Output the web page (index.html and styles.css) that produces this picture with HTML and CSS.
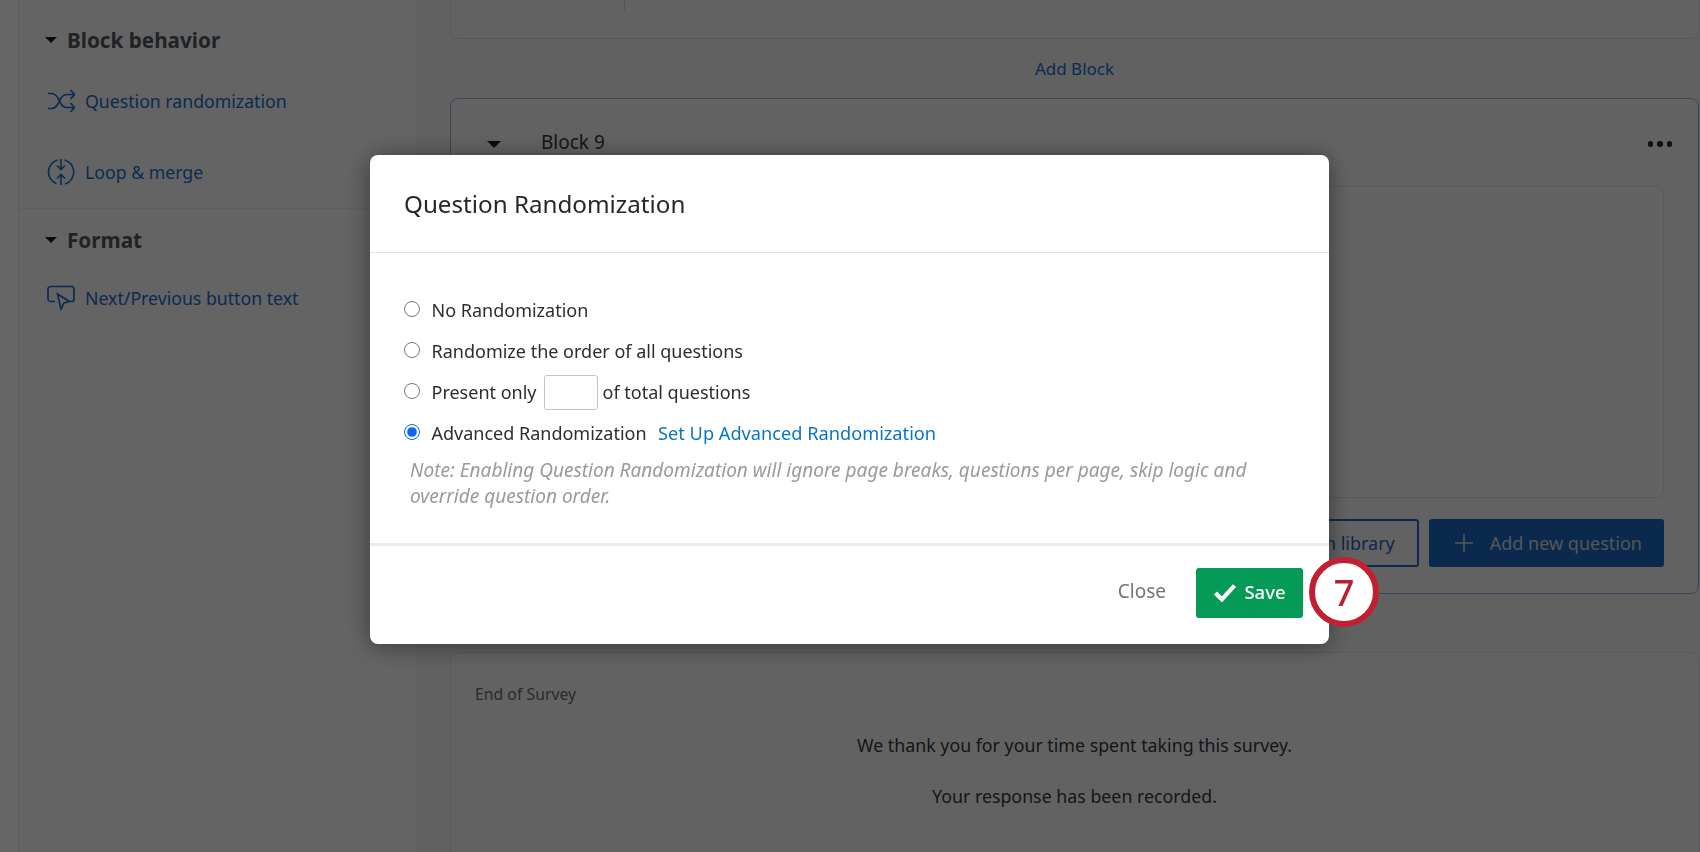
FILE: index.html
```html
<!DOCTYPE html>
<html lang="en">
<head>
<meta charset="utf-8">
<title>Question Randomization</title>
<link rel="stylesheet" href="styles.css">
</head>
<body>
<div class="page">
  <aside class="sidebar">
    <div class="section section-first">
      <h2 class="section-title"><span class="caret"></span>Block behavior</h2>
      <a class="side-link link-shuffle">
        <svg class="side-icon" viewBox="0 0 28 24" fill="none" stroke="currentColor" stroke-width="1.7"><path d="M1 4.500h3.500c3 0 4.500 1.500 6.500 4.500l3 6c2 3 3.500 3.500 6.500 3.500H27M1 19.500h3.500c3 0 4.500-1.500 6.500-4.500l3-6c2-3 3.500-3.500 6.500-3.500H27"/><path d="M23.500 1l4 4.500-4 4.500M23.500 14l4 4.500-4 4.500"/></svg>
        Question randomization
      </a>
      <a class="side-link link-loop">
        <svg class="side-icon" viewBox="0 0 28 28" fill="none" stroke="currentColor" stroke-width="1.600"><path d="M10.500 2A12.500 12.500 0 0 0 9.500 25.700M18 26A12.500 12.500 0 0 0 17.500 2"/><path d="M14 1v10.500M10 7.500l4 4 4-4M14 27V16.500M10 20.500l4-4 4 4"/></svg>
        Loop &amp; merge
      </a>
    </div>
    <div class="section">
      <h2 class="section-title"><span class="caret"></span>Format</h2>
      <a class="side-link link-next">
        <svg class="side-icon" viewBox="0 0 28 25" fill="none" stroke="currentColor" stroke-width="1.700"><path d="M8 16H3.500A2.500 2.500 0 0 1 1 13.500v-10A2.500 2.500 0 0 1 3.500 1h21A2.500 2.500 0 0 1 27 3.500v10a2.500 2.500 0 0 1-2.500 2.500H23"/><path d="M10.500 8.500l12 7.500-5.500 1.500-3 6z"/></svg>
        Next/Previous button text
      </a>
    </div>
  </aside>
  <main class="main">
    <section class="card card-top"><span class="top-divider"></span></section>
    <a class="add-block">Add Block</a>
    <section class="card card-block">
      <header class="block-head">
        <span class="caret caret-block"></span>
        <span class="block-name">Block 9</span>
        <span class="dots"><i></i><i></i><i></i></span>
      </header>
      <div class="block-body"></div>
      <div class="block-actions">
        <button class="btn btn-outline">Import from library</button>
        <button class="btn btn-solid"><svg class="plus" viewBox="0 0 20 20" stroke="currentColor" stroke-width="1.500"><path d="M10 1v18M1 10h18"/></svg>Add new question</button>
      </div>
    </section>
    <section class="card card-end">
      <div class="end-label">End of Survey</div>
      <p class="end-text end-first">We thank you for your time spent taking this survey.</p>
      <p class="end-text">Your response has been recorded.</p>
    </section>
  </main>
</div>

<div class="overlay"></div>

<div class="dialog">
  <h1 class="dialog-title">Question Randomization</h1>
  <form class="dialog-body">
    <label class="option"><input type="radio" name="r"><span>No Randomization</span></label>
    <label class="option"><input type="radio" name="r"><span>Randomize the order of all questions</span></label>
    <label class="option"><input type="radio" name="r"><span>Present only</span><input class="count" type="text"><span>of total questions</span></label>
    <label class="option"><input type="radio" name="r" checked><span>Advanced Randomization</span><a class="setup">Set Up Advanced Randomization</a></label>
    <p class="note">Note: Enabling Question Randomization will ignore page breaks, questions per page, skip logic and override question order.</p>
  </form>
  <footer class="dialog-foot">
    <button class="close" type="button">Close</button>
    <button class="save" type="button"><svg class="check" viewBox="0 0 22 18" fill="none" stroke="currentColor" stroke-width="4"><path d="M2 9.500l6 6L20 2.500"/></svg>Save</button>
  </footer>
  <div class="step">7</div>
</div>
</body>
</html>
```

FILE: styles.css
```css
* { box-sizing: border-box; }
html, body { margin: 0; height: 100%; overflow: hidden; }
body { font-family: "Noto Sans", "Open Sans", sans-serif; background: #fff; color: #32363a; }

.page { display: flex; height: 852px; padding-left: 18px; }
.sidebar { width: 398px; flex: none; border-left: 1px solid #ededed; background: #fafafa; }
.section { padding: 0 0 0 26px; }
.section-first { padding-top: 24px; padding-bottom: 22px; border-bottom: 1px solid #ececec; }
.section-title { display: flex; align-items: center; margin: 0; font-size: 20.700px; line-height: 32px; font-weight: 700; color: #525860; }
.section:not(.section-first) .section-title { margin-top: 14.500px; }
.caret { width: 0; height: 0; border: 6px solid transparent; border-top: 6px solid #1e1e1e; border-bottom: 0; margin-right: 10px; margin-left: 0; }
.side-link { display: flex; align-items: center; gap: 10px; margin-top: 31px; font-size: 17.700px; line-height: 28px; color: #1a6bcc; }
.link-loop { margin-top: 43px; }
.link-next { margin-top: 28px; }
.side-icon { width: 28px; height: 28px; flex: none; margin-left: 2px; }

.main { flex: 1; min-width: 0; padding: 0 1px 0 34px; background: #f2f2f2; display: flex; flex-direction: column; }
.card { background: #f6f6f6; border: 1px solid #dedede; border-radius: 8px; }
.card-top { height: 79px; margin-top: -40px; flex: none; border-top: 0; }
.top-divider { display: block; width: 1px; height: 10px; margin: 40px 0 0 173px; background: #cfcfcf; }
.add-block { display: block; margin-top: 17px; height: 26px; line-height: 26px; text-align: center; font-size: 17px; color: #1a6bcc; }
.card-block { margin-top: 16px; height: 496px; flex: none; border-color: #8db4dd; padding: 0 34px 0 24px; }
.block-head { display: flex; align-items: center; height: 87px; }
.caret-block { border-width: 7px; border-top-width: 7px; border-bottom: 0; margin: 4px 0 0 12px; }
.block-name { margin-left: 40px; margin-bottom: 2px; font-size: 19px; color: #33383e; }
.dots { margin-left: auto; display: flex; gap: 4px; margin-right: -8px; margin-top: 3px; }
.dots i { width: 5.500px; height: 5.500px; border-radius: 50%; background: #2a2a2a; }
.block-body { height: 312px; border: 1px solid #e0e0e0; border-radius: 8px; background: #f7f7f7; }
.block-actions { display: flex; justify-content: flex-end; gap: 10px; margin-top: 21px; }
.btn { height: 48px; font: inherit; font-size: 18px; border-radius: 3px; display: flex; align-items: center; }
.btn-outline { padding: 0 22px; border: 2px solid #1a66c0; background: transparent; color: #1a66c0; }
.btn-solid { padding: 0 22px 0 25px; border: 0; background: #1a66c0; color: #d8d8d8; }
.plus { width: 20px; height: 20px; margin-right: 16px; }
.card-end { margin-top: 58px; flex: 1 0 220px; padding: 30px 0 0 24px; }
.end-label { font-size: 15.800px; line-height: 22px; color: #6d6d6d; }
.end-text { margin: 0 0 0 -24px; text-align: center; font-size: 17.800px; line-height: 26px; color: #35383c; }
.end-first { margin-top: 27px; margin-bottom: 25px; }

.overlay { position: fixed; inset: 0; background: rgba(0,0,0,.6); }

.dialog { position: fixed; left: 370px; top: 155px; width: 959px; height: 489px; background: #fff; border-radius: 8px; box-shadow: 0 2px 24px rgba(0,0,0,.45); display: flex; flex-direction: column; }
.dialog-title { margin: 0; height: 98px; padding: 0 34px; display: flex; align-items: center; font-size: 24.200px; font-weight: 400; color: #25282b; border-bottom: 1px solid #e4e4e4; }
.dialog-body { flex: 1; padding: 36px 34px 0; }
.option { display: flex; align-items: center; height: 41px; font-size: 18px; color: #2b2e31; }
.option input[type=radio] { width: 16px; height: 16px; margin: 0 11.500px 2px 0; accent-color: #0a66ee; }
.count { width: 54px; height: 35px; margin: 1px 5px 0 7px; border: 1px solid #c4c4c4; border-radius: 3px; background: #fff; }
.setup { margin-left: 11.500px; font-size: 18.200px; color: #0b74c4; }
.note { margin: 4px 0 0 6px; font-size: 19.050px; line-height: 26px; font-style: italic; color: #9a9a9a; }
.dialog-foot { height: 101px; flex: none; border-top: 3px solid #ececec; display: flex; justify-content: flex-end; align-items: flex-start; padding: 22px 26px 0 0; }
.close { border: 0; background: none; font: inherit; font-size: 19px; color: #737373; height: 50px; margin-right: 30px; padding: 0 0 4px; }
.save { width: 107px; height: 50px; padding: 0 0 4px; border: 0; border-radius: 3px; background: #059a55; color: #fff; font: inherit; font-size: 18.500px; font-weight: 500; display: flex; align-items: center; justify-content: center; gap: 7px; }
.check { width: 24px; height: 19px; margin-top: 3px; }
.step { position: absolute; left: 939px; top: 402px; width: 70px; height: 70px; border-radius: 50%; border: 6.500px solid #c02030; background: #fff; color: #b8202f; font-size: 36px; font-weight: 500; display: flex; align-items: center; justify-content: center; }
```
